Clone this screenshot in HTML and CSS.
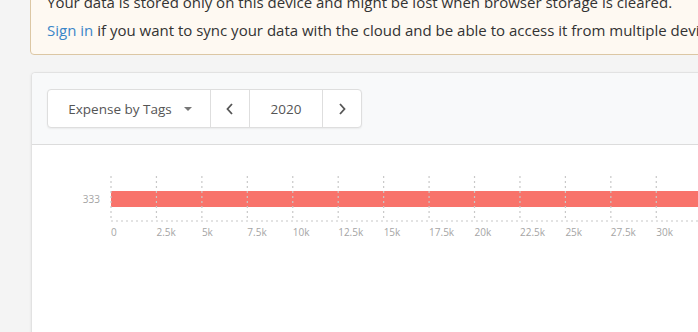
FILE: index.html
```html
<!DOCTYPE html>
<html lang="en">
<head>
  <meta charset="UTF-8"/>
  <title>Reports</title>
  <link rel="stylesheet" href="styles.css">
</head>
<body>
  <div class="page">
    <div class="alert">
      <p>Your data is stored only on this device and might be lost when browser storage is cleared.</p>
      <p><a href="#">Sign in</a> if you want to sync your data with the cloud and be able to access it from multiple devices.</p>
    </div>

    <div class="card">
      <div class="card-header">
        <div class="btn-group">
          <button class="btn btn-select">Expense by Tags <span class="caret"></span></button>
          <button class="btn btn-arrow">
            <svg width="10" height="14" viewBox="0 0 10 14"><path d="M7 2 L2.5 7 L7 12" fill="none" stroke="#555" stroke-width="1.8"/></svg>
          </button>
          <button class="btn btn-year">2020</button>
          <button class="btn btn-arrow">
            <svg width="10" height="14" viewBox="0 0 10 14"><path d="M3 2 L7.5 7 L3 12" fill="none" stroke="#555" stroke-width="1.8"/></svg>
          </button>
        </div>
      </div>
      <div class="card-body">
        <svg class="chart" width="667" height="187" viewBox="31 145 667 187">
          <text x="100" y="203" class="axis-label" text-anchor="end">333</text>
          <rect x="111" y="191" width="600" height="16" fill="#f8736b"/>
          <g class="grid" id="grid"></g>
          <line x1="111" y1="221" x2="698" y2="221" class="grid-line"/>
          <g id="ticks"></g>
        </svg>
      </div>
    </div>
  </div>
  <script>
    const grid = document.getElementById('grid');
    const ticks = document.getElementById('ticks');
    const labels = ['0', '2.5k', '5k', '7.5k', '10k', '12.5k', '15k', '17.5k', '20k', '22.5k', '25k', '27.5k', '30k'];
    const ns = 'http://www.w3.org/2000/svg';

    labels.forEach((label, i) => {
      const x = 111 + i * 45.44;
      const line = document.createElementNS(ns, 'line');
      line.setAttribute('x1', x);
      line.setAttribute('x2', x);
      line.setAttribute('y1', 176);
      line.setAttribute('y2', 221);
      line.setAttribute('class', 'grid-line');
      grid.appendChild(line);

      const text = document.createElementNS(ns, 'text');
      text.setAttribute('x', x);
      text.setAttribute('y', 236);
      text.setAttribute('class', 'axis-label');
      text.textContent = label;
      ticks.appendChild(text);
    });
  </script>
</body>
</html>
```

FILE: styles.css
```css
body {
  margin: 0;
  background: #f4f4f4;
  font-family: "Open Sans", sans-serif;
  overflow: hidden;
  height: 332px;
}
.page {
  width: 760px;
  padding-left: 30px;
}
.alert {
  margin-top: -21px;
  padding: 12px 16px 14px;
  background: #fef9f2;
  border: 1px solid #dcc7a4;
  border-radius: 4px;
  color: #333;
  font-size: 15px;
}
.alert p {
  margin: 0 0 8px;
  line-height: 20px;
  white-space: nowrap;
}
.alert p:last-child {
  margin-bottom: 0;
}
.alert a {
  color: #3a86c8;
  text-decoration: none;
}
.card {
  margin-top: 17px;
  margin-left: 1px;
  background: #fff;
  border: 1px solid #e2e2e2;
  border-radius: 4px;
  box-shadow: 0 1px 3px rgba(0,0,0,0.08);
  height: 400px;
}
.card-header {
  background: #f8f9fa;
  padding: 16px 15px;
  border-bottom: 1px solid #dcdcdc;
  border-radius: 4px 4px 0 0;
}
.btn-group {
  display: inline-flex;
  height: 37px;
  background: #fff;
  border: 1px solid #dedede;
  border-radius: 4px;
  box-shadow: 0 1px 2px rgba(0,0,0,0.06);
}
.btn {
  display: flex;
  align-items: center;
  justify-content: center;
  height: 100%;
  padding: 0;
  background: none;
  border: none;
  border-left: 1px solid #dedede;
  font-family: "Open Sans", sans-serif;
  font-size: 13.5px;
  color: #555;
}
.btn:first-child {
  border-left: none;
}
.btn-select {
  width: 162px;
  gap: 12px;
  padding-left: 2px;
}
.caret {
  width: 0;
  height: 0;
  border-left: 4px solid transparent;
  border-right: 4px solid transparent;
  border-top: 4px solid #777;
}
.btn-arrow {
  width: 39px;
}
.btn-year {
  width: 73px;
}
.card-body {
  background: #fff;
}
.chart {
  display: block;
  margin-left: -1px;
}
.grid-line {
  stroke: #c8c8c8;
  stroke-width: 1.2;
  stroke-dasharray: 2 3;
}
.axis-label {
  font-family: "Open Sans", sans-serif;
  font-size: 10px;
  fill: #a5a5a5;
}
```
